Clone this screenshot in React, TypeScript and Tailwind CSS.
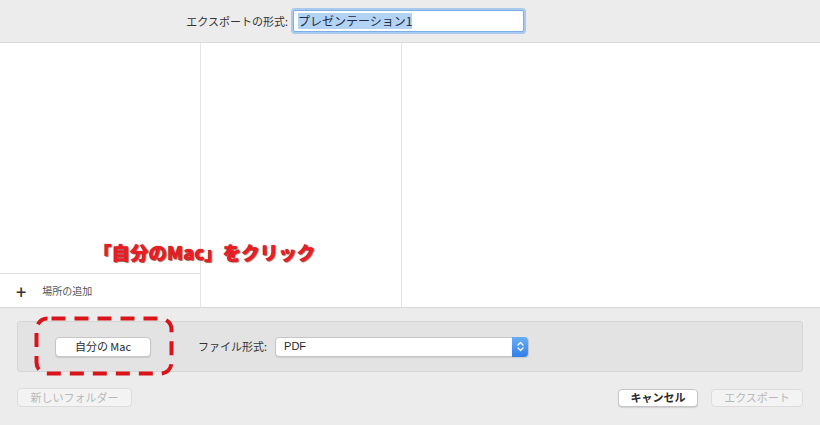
import * as React from 'react';

const jp = '"Noto Sans CJK JP", "Liberation Sans", sans-serif';

function MacButton({ label, disabled, className }: { label: string; disabled?: boolean; className?: string }) {
  return (
    <div
      className={`flex items-center justify-center rounded-[4px] border text-[11px] ${
        disabled
          ? 'border-[#dcdcdc] bg-[#f3f3f3] text-[#b8b8b8]'
          : 'border-[#c6c6c6] bg-white text-[#2a2a2a] shadow-[0_1px_1px_rgba(0,0,0,0.12)]'
      } ${className ?? ''}`}
    >
      {label}
    </div>
  );
}

export default function App() {
  return (
    <div className="relative flex h-[425px] w-[820px] flex-col overflow-hidden bg-[#ececec]" style={{ fontFamily: jp }}>
      {/* top bar */}
      <div className="flex h-[43px] items-center border-b border-[#dadada] bg-[#ececec]">
        <div className="w-[289px] pr-[1px] text-right text-[11px] text-[#333]">エクスポートの形式:</div>
        <div className="ml-[4px] flex h-[22px] w-[231px] items-center rounded-[2px] border border-[#7eaee6] bg-white px-[4px] shadow-[0_0_0_2px_#a9c9ef]">
          <span className="bg-[#b3d3f5] text-[12px] leading-[16px] text-[#1f2a44]">プレゼンテーション1</span>
        </div>
      </div>

      {/* browser columns */}
      <div className="flex h-[264px] bg-white">
        <div className="flex w-[201px] flex-col border-r border-[#e6e6e6]">
          <div className="flex-1" />
          <div className="flex h-[34px] items-center gap-[16px] border-t border-[#e4e4e4] pl-[16px] text-[10px] text-[#555]">
            <span className="text-[18px] font-medium leading-none text-[#333]">+</span>
            <span>場所の追加</span>
          </div>
        </div>
        <div className="w-[201px] border-r border-[#e6e6e6]" />
        <div className="flex-1" />
      </div>

      {/* bottom panel */}
      <div className="flex flex-1 flex-col border-t border-[#d8d8d8] px-[17px] pt-[13px]">
        <div className="flex h-[51px] items-center rounded-[3px] border border-[#d6d6d6] bg-[#e3e3e3] pl-[37px]">
          <MacButton label="自分の Mac" className="h-[20px] w-[96px]" />
          <span className="ml-[47px] text-[11px] text-[#333]">ファイル形式:</span>
          <div className="ml-[8px] flex h-[20px] w-[254px] items-center justify-between rounded-[4px] border border-[#c6c6c6] bg-white pl-[8px] shadow-[0_1px_1px_rgba(0,0,0,0.1)]">
            <span className="text-[11px] text-[#2a2a2a]" style={{ fontFamily: '"Liberation Sans", sans-serif' }}>PDF</span>
            <div className="flex h-[20px] w-[16px] items-center justify-center rounded-r-[4px] bg-gradient-to-b from-[#6aaef8] to-[#2f7fe9]">
              <svg width="7" height="11" viewBox="0 0 7 11" fill="none" stroke="white" strokeWidth="1.3" strokeLinecap="round" strokeLinejoin="round">
                <path d="M1 4 L3.5 1.5 L6 4" />
                <path d="M1 7 L3.5 9.5 L6 7" />
              </svg>
            </div>
          </div>
        </div>
        <div className="mt-[16px] flex items-center justify-between">
          <MacButton label="新しいフォルダー" disabled className="h-[19px] w-[115px]" />
          <div className="flex gap-[13px]">
            <MacButton label="キャンセル" className="h-[18px] w-[80px] font-bold" />
            <MacButton label="エクスポート" disabled className="h-[18px] w-[92px]" />
          </div>
        </div>
      </div>

      {/* annotation */}
      <div
        className="absolute left-[93px] top-[240px] text-[18.5px] font-black leading-[24px] text-[#ee1c24]"
        style={{ textShadow: '0 0 1px #7a0000, 1px 1px 1px rgba(120,0,0,0.6)' }}
      >
        「自分のMac」をクリック
      </div>
      <svg className="absolute left-[34px] top-[316px]" width="140" height="60" viewBox="0 0 140 60" fill="none">
        <rect
          x="2.5"
          y="2.5"
          width="135"
          height="55"
          rx="11"
          stroke="#d9141b"
          strokeWidth="4"
          strokeDasharray="14 9"
          strokeDashoffset="-4"
        />
      </svg>
    </div>
  );
}
